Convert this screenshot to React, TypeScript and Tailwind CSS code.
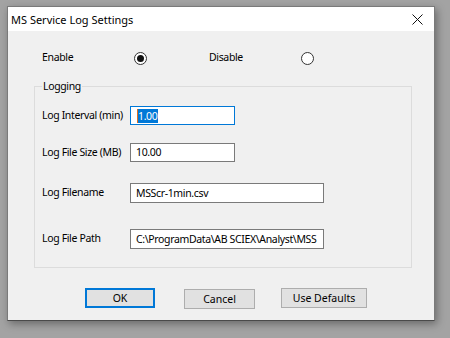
export default function App() {
  const font = { fontFamily: '"Noto Sans", "Open Sans", sans-serif' };
  return (
    <div className="w-[450px] h-[338px] bg-[#a3a3a3] pt-[6px] pl-[7px] overflow-hidden" style={font}>
      {/* dialog window */}
      <div className="w-[428px] h-[315px] bg-[#f0f0f0] border border-[#7a7a7a] border-b-[#4a4a4a] shadow-[2px_3px_8px_rgba(0,0,0,0.35)] flex flex-col">
        {/* title bar */}
        <div className="h-[24px] bg-white flex items-center justify-between pl-[3px] pr-[10px] shrink-0">
          <span className="text-[11px] text-black leading-none">MS Service Log Settings</span>
          <svg width="11" height="11" viewBox="0 0 11 11" className="mr-[1px]">
            <path d="M0.5 0.5 L10.5 10.5 M10.5 0.5 L0.5 10.5" stroke="#111" strokeWidth="1" fill="none" />
          </svg>
        </div>

        {/* body */}
        <div className="pl-[26px] pt-[20px] text-[10.5px] tracking-[-0.35px] text-black">
          {/* enable / disable */}
          <div className="flex items-center h-[14px] pl-[8px]">
            <span className="w-[92px]">Enable</span>
            <Radio checked />
            <span className="w-[62px]" />
            <span className="w-[92px]">Disable</span>
            <Radio />
          </div>

          {/* logging group box */}
          <div className="relative mt-[21px] w-[378px] border border-[#dcdcdc] pl-[7px] pt-[19px] pb-[18px]">
            <span className="absolute -top-[8px] left-[7px] bg-[#f0f0f0] px-[1px] leading-[14px]">
              Logging
            </span>

            <div className="flex items-center h-[19px]">
              <span className="w-[88px] whitespace-nowrap">Log Interval (min)</span>
              <div className="w-[105px] h-[19px] bg-white border border-[#0078d7] flex items-center pl-[6px]">
                <span className="border-l border-[#e07020] bg-[#0078d7] text-white leading-[14px] pr-[1px]">1.00</span>
              </div>
            </div>

            <div className="flex items-center h-[19px] mt-[18px]">
              <span className="w-[88px] whitespace-nowrap">Log File Size (MB)</span>
              <Field w="w-[105px]" h="h-[19px]" value="10.00" />
            </div>

            <div className="flex items-center h-[20px] mt-[21px]">
              <span className="w-[88px] whitespace-nowrap">Log Filename</span>
              <Field w="w-[194px]" h="h-[20px]" value="MSScr-1min.csv" />
            </div>

            <div className="flex items-center h-[20px] mt-[26px]">
              <span className="w-[88px] whitespace-nowrap">Log File Path</span>
              <Field w="w-[194px]" h="h-[20px]" value="C:\ProgramData\AB SCIEX\Analyst\MSS" />
            </div>
          </div>

          {/* buttons */}
          <div className="flex mt-[20px] pl-[51px] tracking-normal">
            <button className="w-[70px] h-[20px] bg-[#e1e1e1] border border-[#0078d7] shadow-[inset_0_0_0_1px_#0078d7] leading-none">
              OK
            </button>
            <button className="ml-[29px] mt-[1px] w-[71px] h-[20px] bg-[#e1e1e1] border border-[#adadad] leading-none">
              Cancel
            </button>
            <button className="ml-[26px] w-[86px] h-[20px] bg-[#e1e1e1] border border-[#adadad] leading-none">
              Use Defaults
            </button>
          </div>
        </div>
      </div>
    </div>
  );
}

function Radio({ checked }: { checked?: boolean }) {
  return (
    <span className="w-[13px] h-[13px] rounded-full border border-[#333] bg-white flex items-center justify-center shrink-0">
      {checked && <span className="w-[7px] h-[7px] rounded-full bg-[#111]" />}
    </span>
  );
}

function Field({ w, h, value }: { w: string; h: string; value: string }) {
  return (
    <div className={`${w} ${h} bg-white border border-[#7a7a7a] flex items-center pl-[5px] overflow-hidden`}>
      <span className="whitespace-nowrap leading-none">{value}</span>
    </div>
  );
}
